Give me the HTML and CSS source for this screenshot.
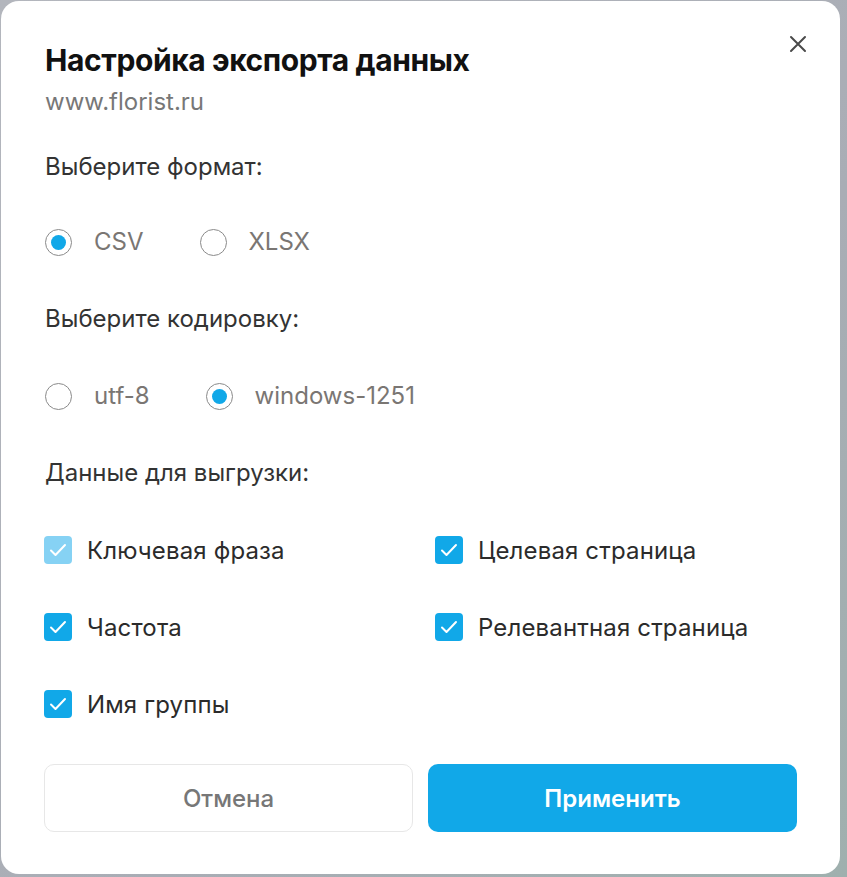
FILE: index.html
```html
<!DOCTYPE html>
<html lang="ru">
<head>
<meta charset="utf-8">
<title>Настройка экспорта данных</title>
<link rel="stylesheet" href="styles.css">
</head>
<body>
<div class="modal">
  <button class="close" aria-label="Закрыть">
    <svg width="18" height="18" viewBox="0 0 18 18"><path d="M2 2L16 16M16 2L2 16" stroke="#4a4a4a" stroke-width="2" stroke-linecap="round"/></svg>
  </button>
  <h1 class="title">Настройка экспорта данных</h1>
  <div class="subtitle">www.florist.ru</div>

  <div class="section-label">Выберите формат:</div>
  <div class="radio-row">
    <label class="radio checked"><span class="dot"></span><span class="rlabel">CSV</span></label>
    <label class="radio"><span class="dot"></span><span class="rlabel">XLSX</span></label>
  </div>

  <div class="section-label">Выберите кодировку:</div>
  <div class="radio-row second">
    <label class="radio"><span class="dot"></span><span class="rlabel">utf-8</span></label>
    <label class="radio checked"><span class="dot"></span><span class="rlabel">windows-1251</span></label>
  </div>

  <div class="section-label">Данные для выгрузки:</div>
  <div class="checks">
    <label class="check disabled"><span class="box"><svg width="18" height="14" viewBox="0 0 18 14"><path d="M2 7.5L6.5 12L16 2" fill="none" stroke="#fff" stroke-width="2" stroke-linecap="round" stroke-linejoin="round"/></svg></span>Ключевая фраза</label>
    <label class="check"><span class="box"><svg width="18" height="14" viewBox="0 0 18 14"><path d="M2 7.5L6.5 12L16 2" fill="none" stroke="#fff" stroke-width="2" stroke-linecap="round" stroke-linejoin="round"/></svg></span>Целевая страница</label>
    <label class="check"><span class="box"><svg width="18" height="14" viewBox="0 0 18 14"><path d="M2 7.5L6.5 12L16 2" fill="none" stroke="#fff" stroke-width="2" stroke-linecap="round" stroke-linejoin="round"/></svg></span>Частота</label>
    <label class="check"><span class="box"><svg width="18" height="14" viewBox="0 0 18 14"><path d="M2 7.5L6.5 12L16 2" fill="none" stroke="#fff" stroke-width="2" stroke-linecap="round" stroke-linejoin="round"/></svg></span>Релевантная страница</label>
    <label class="check"><span class="box"><svg width="18" height="14" viewBox="0 0 18 14"><path d="M2 7.5L6.5 12L16 2" fill="none" stroke="#fff" stroke-width="2" stroke-linecap="round" stroke-linejoin="round"/></svg></span>Имя группы</label>
  </div>

  <div class="buttons">
    <button class="btn cancel">Отмена</button>
    <button class="btn apply">Применить</button>
  </div>
</div>
</body>
</html>
```
FILE: styles.css
```css
* { box-sizing: border-box; }
html, body { margin: 0; padding: 0; }
body {
  width: 847px;
  height: 877px;
  background: linear-gradient(135deg, #b3b6bd 0%, #a9adb5 60%, #9fb0ae 100%);
  font-family: Inter, "Noto Sans", sans-serif;
  padding: 1px 0 0 1px;
  overflow: hidden;
}
.modal {
  position: relative;
  width: 839px;
  height: 873px;
  background: #fff;
  border-radius: 18px;
  padding: 41px 42px 0 44px;
}
.close {
  position: absolute;
  top: 34px;
  right: 33px;
  width: 18px;
  height: 18px;
  padding: 0;
  border: 0;
  background: none;
}
.close svg { display: block; }
.title {
  margin: 0;
  font-size: 30px;
  font-weight: 700;
  line-height: 36px;
  color: #111;
  letter-spacing: -0.4px;
}
.subtitle {
  margin-top: 11px;
  font-size: 24px;
  line-height: 26px;
  color: #777;
}
.section-label {
  margin-top: 39px;
  font-size: 24px;
  line-height: 26px;
  color: #333;
}
.radio-row {
  display: flex;
  margin-top: 49px;
  height: 26px;
  align-items: center;
}
.radio-row.second { margin-top: 51px; }
.radio-row + .section-label { margin-top: 51px; }
.radio {
  display: flex;
  align-items: center;
  margin-right: 56px;
}
.dot {
  width: 27px;
  height: 27px;
  border-radius: 50%;
  border: 1.5px solid #8a8a8a;
  display: flex;
  align-items: center;
  justify-content: center;
  margin-right: 22px;
}
.radio.checked .dot::after {
  content: "";
  width: 15px;
  height: 15px;
  border-radius: 50%;
  background: #11a8e8;
}
.rlabel {
  font-size: 24px;
  line-height: 26px;
  color: #7a7673;
}
.checks {
  display: grid;
  grid-template-columns: 391px 1fr;
  row-gap: 49px;
  margin-top: 50px;
  margin-left: -1px;
}
.check {
  display: flex;
  align-items: center;
  font-size: 24px;
  letter-spacing: 0.15px;
  color: #2b2b2b;
  height: 28px;
}
.box {
  width: 28px;
  height: 28px;
  border-radius: 4px;
  background: #11a8e8;
  display: flex;
  align-items: center;
  justify-content: center;
  margin-right: 15px;
}
.box svg { display: block; }
.check.disabled .box { background: #86d2f4; }
.buttons {
  display: flex;
  gap: 15px;
  margin-top: 46px;
  margin-left: -1px;
}
.btn {
  flex: none;
  width: 369px;
  height: 68px;
  border-radius: 10px;
  font-family: Inter, "Noto Sans", sans-serif;
  font-size: 24px;
  font-weight: 600;
}
.cancel {
  background: #fff;
  border: 1px solid #e7e7e7;
  color: #777;
  font-weight: 500;
}
.apply {
  background: #11a8e8;
  border: 0;
  color: #fff;
}
```
